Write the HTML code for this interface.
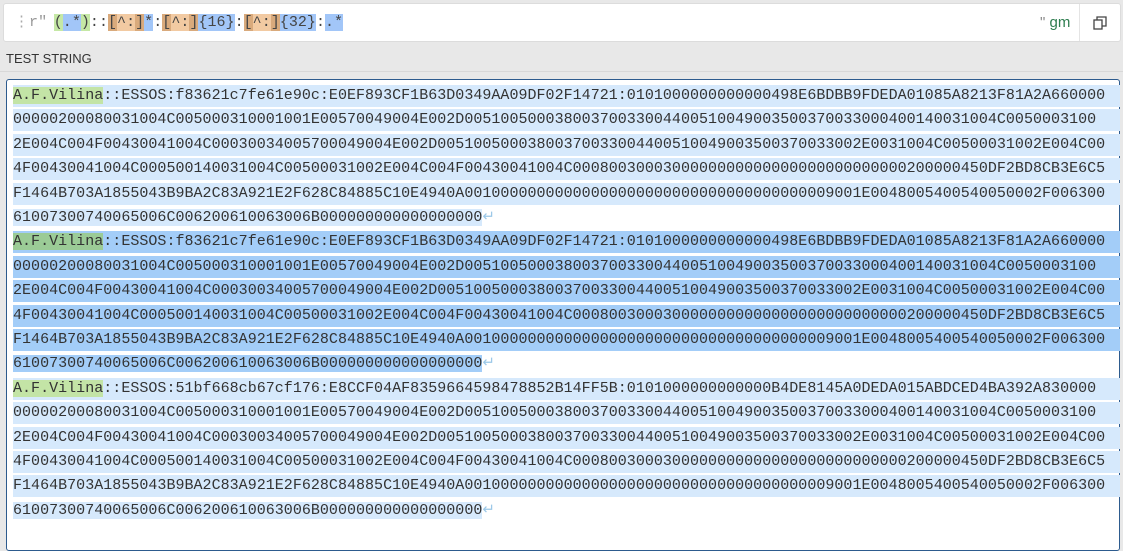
<!DOCTYPE html>
<html><head><meta charset="utf-8"><style>
body{margin:0;width:1123px;height:532px;background:#e8e8e8;overflow:hidden;position:relative;font-family:"Liberation Mono",monospace;}
.bar{position:absolute;left:3px;top:3px;width:1116px;height:37px;background:#fff;border:1px solid #dcdcdc;border-radius:3px;}
.rx{position:absolute;left:10px;top:9px;font-size:15px;line-height:20px;color:#444;white-space:pre;letter-spacing:0.03px}
.rx .g{background:#c5e8a5}.rx .b{background:#a2c6f8}.rx .t{background:#d9aa7c}.rx .tl{background:#f2caa2}
.flags{position:absolute;left:1036px;top:10px;font-family:"Liberation Sans",sans-serif;font-size:15px;color:#2e7d4f}
.sep{position:absolute;left:1075px;top:0;width:1px;height:37px;background:#e4e4e4}
.ts{position:absolute;left:6px;top:51px;font-family:"Liberation Sans",sans-serif;font-size:13px;color:#333;font-weight:500}
.hr{position:absolute;left:0;top:71px;width:1123px;height:1px;background:#d8d8d8}
.box{position:absolute;left:6px;top:79px;width:1112px;height:470px;background:#fff;border:1px solid #2d5b8e;border-radius:3px;}
.l{position:absolute;left:6px;height:22px;line-height:22px;font-size:15px;color:#333;white-space:pre;letter-spacing:0.025px}
.a{background:#d6e9fc}.d{background:#a3cdf8}.ga{background:#c3e4a6}.gd{background:#9bcb96}
.w{width:1107px}
.r{color:#9cc8e8}
</style></head><body>
<div class="bar">
<div class="rx"><span style="color:#aaa">⋮</span><span style="color:#999">r"</span><span style="font-size:11px"> </span><span class="g">(<span class="b">.*</span>)</span>::<span class="t">[</span><span class="tl">^:</span><span class="t">]</span><span class="b">*</span>:<span class="t">[</span><span class="tl">^:</span><span class="t">]</span><span class="b">{16}</span>:<span class="t">[</span><span class="tl">^:</span><span class="t">]</span><span class="b">{32}</span>:<span class="b">.*</span></div>
<div class="flags"><span style="color:#888">"</span> gm</div>
<div class="sep"></div>
<svg style="position:absolute;left:1089px;top:12px" width="14" height="14" viewBox="0 0 14 14" fill="none" stroke="#444" stroke-width="1.3"><rect x="1" y="4" width="8" height="9"/><path d="M4 4V1h9v9h-4"/></svg>
</div>
<div class="ts">TEST STRING</div>
<div class="hr"></div>
<div class="box">
<div class="l a w" style="top:5px"><span class="ga">A.F.Vilina</span>::ESSOS:f83621c7fe61e90c:E0EF893CF1B63D0349AA09DF02F14721:0101000000000000498E6BDBB9FDEDA01085A8213F81A2A660000</div>
<div class="l a w" style="top:29.4px">00000200080031004C005000310001001E00570049004E002D00510050003800370033004400510049003500370033000400140031004C0050003100</div>
<div class="l a w" style="top:53.8px">2E004C004F00430041004C00030034005700049004E002D00510050003800370033004400510049003500370033002E0031004C00500031002E004C00</div>
<div class="l a w" style="top:78.2px">4F00430041004C000500140031004C00500031002E004C004F00430041004C0008003000300000000000000000000000000200000450DF2BD8CB3E6C5</div>
<div class="l a w" style="top:102.6px">F1464B703A1855043B9BA2C83A921E2F628C84885C10E4940A00100000000000000000000000000000000000009001E0048005400540050002F006300</div>
<div class="l" style="top:127px"><span class="a">61007300740065006C006200610063006B000000000000000000</span><span class="r">↵</span></div>
<div class="l d w" style="top:151.4px"><span class="gd">A.F.Vilina</span>::ESSOS:f83621c7fe61e90c:E0EF893CF1B63D0349AA09DF02F14721:0101000000000000498E6BDBB9FDEDA01085A8213F81A2A660000</div>
<div class="l d w" style="top:175.8px">00000200080031004C005000310001001E00570049004E002D00510050003800370033004400510049003500370033000400140031004C0050003100</div>
<div class="l d w" style="top:200.2px">2E004C004F00430041004C00030034005700049004E002D00510050003800370033004400510049003500370033002E0031004C00500031002E004C00</div>
<div class="l d w" style="top:224.6px">4F00430041004C000500140031004C00500031002E004C004F00430041004C0008003000300000000000000000000000000200000450DF2BD8CB3E6C5</div>
<div class="l d w" style="top:249px">F1464B703A1855043B9BA2C83A921E2F628C84885C10E4940A00100000000000000000000000000000000000009001E0048005400540050002F006300</div>
<div class="l" style="top:273.4px"><span class="d">61007300740065006C006200610063006B000000000000000000</span><span class="r">↵</span></div>
<div class="l a w" style="top:297.8px"><span class="ga">A.F.Vilina</span>::ESSOS:51bf668cb67cf176:E8CCF04AF8359664598478852B14FF5B:0101000000000000B4DE8145A0DEDA015ABDCED4BA392A830000</div>
<div class="l a w" style="top:322.2px">00000200080031004C005000310001001E00570049004E002D00510050003800370033004400510049003500370033000400140031004C0050003100</div>
<div class="l a w" style="top:346.6px">2E004C004F00430041004C00030034005700049004E002D00510050003800370033004400510049003500370033002E0031004C00500031002E004C00</div>
<div class="l a w" style="top:371px">4F00430041004C000500140031004C00500031002E004C004F00430041004C0008003000300000000000000000000000000200000450DF2BD8CB3E6C5</div>
<div class="l a w" style="top:395.4px">F1464B703A1855043B9BA2C83A921E2F628C84885C10E4940A00100000000000000000000000000000000000009001E0048005400540050002F006300</div>
<div class="l" style="top:419.8px"><span class="a">61007300740065006C006200610063006B000000000000000000</span><span class="r">↵</span></div>
</div>
</body></html>
